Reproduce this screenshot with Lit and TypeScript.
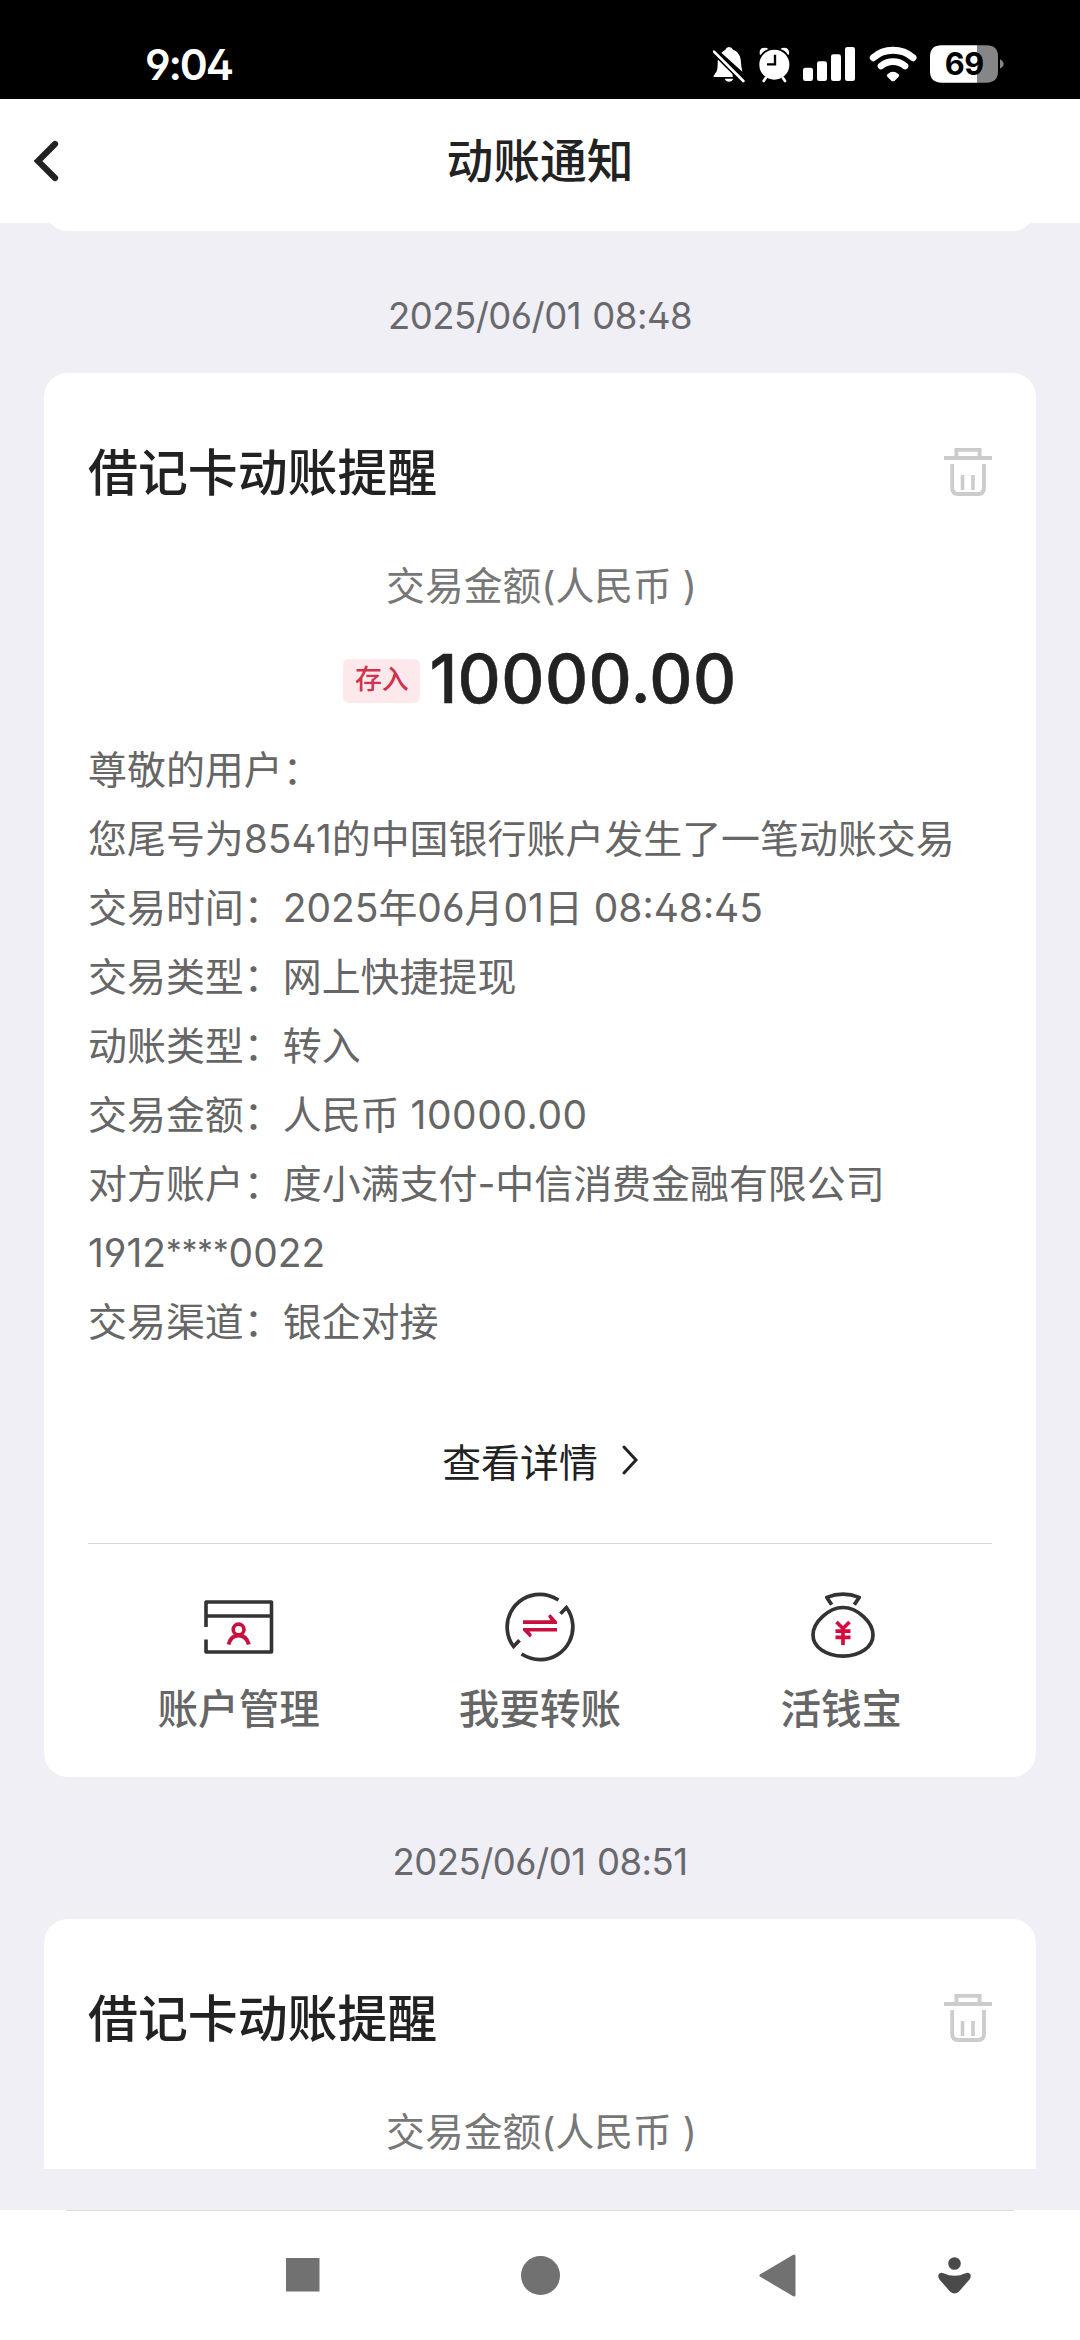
import { LitElement, html, css, svg, nothing } from "lit";
import { customElement, property } from "lit/decorators.js";

const font = css`"Inter", "Noto Sans CJK SC", sans-serif`;

@customElement("status-bar")
class StatusBar extends LitElement {
  static styles = css`
    :host {
      display: flex;
      box-sizing: border-box;
      height: 99px;
      padding: 45px 76px 0 145px;
      background: #000;
      color: #fff;
      font-family: ${font};
    }
    .clock {
      flex: 1;
      height: 40px;
      line-height: 39px;
      font-size: 42.5px;
      font-weight: 600;
      letter-spacing: -2.2px;
      font-feature-settings: "ss01";
    }
    .icons {
      display: flex;
      gap: 13.5px;
    }
    svg {
      display: block;
      height: 38px;
      fill: #fff;
    }
    .level {
      font: 700 92px "Inter", sans-serif;
      letter-spacing: -1px;
      fill: #000;
    }
  `;
  render() {
    return html`
      <div class="clock">9:04</div>
      <div class="icons">
        <svg viewBox="99 75 96 114" width="32">
          <path d="M124 98Q132 92 136 89Q139 81 147 81Q156 81 159 89Q178 95 182 118L184 139L187 155Z" />
          <path d="M114 108L165 160H158V171H101V167L110 154Q113 148 113 130Z" />
          <path d="M134 176H160Q156 185 147 185Q138 185 134 176Z" />
          <path d="M102 95L190 183" stroke="#000" stroke-width="17" />
          <path d="M102 95L190 183" stroke="#fff" stroke-width="8" stroke-linecap="round" />
        </svg>
        <svg viewBox="233 75 92 114" width="30.7">
          <path d="M235 103V95Q237 83 249 83Q257 83 261 87Q245 92 238 105ZM323 103V95Q321 83 309 83Q301 83 297 87Q313 92 320 105Z" />
          <circle cx="279" cy="134" r="45" />
          <path d="M253 174L247 183M305 174L311 183" stroke="#fff" stroke-width="8" stroke-linecap="round" />
          <path d="M281 104V133H257" fill="none" stroke="#000" stroke-width="7" />
        </svg>
        <svg viewBox="366 75 156 114" width="52">
          <rect x="366" y="143" width="30" height="40" rx="7" />
          <rect x="408" y="124" width="30" height="59" rx="7" />
          <rect x="450" y="103" width="30" height="80" rx="7" />
          <rect x="492" y="81" width="30" height="102" rx="7" />
        </svg>
        <svg viewBox="564 75 144 114" width="48">
          <path d="M577 113Q602 91 636 91Q671 91 696 113" fill="none" stroke="#fff" stroke-width="21" stroke-linecap="round" />
          <path d="M600 138Q615 125 636 125Q657 125 672 138" fill="none" stroke="#fff" stroke-width="20" stroke-linecap="round" />
          <path d="M620 162Q636 148 652 162Q657 166 653 170L641 182Q636 186 631 182L619 170Q615 166 620 162Z" />
        </svg>
        <svg viewBox="750 75 222 114" width="74">
          <path d="M785 76H891V188H785Q750 188 750 154V110Q750 76 785 76Z" />
          <path d="M891 76H919Q954 76 954 110V154Q954 188 919 188H891ZM960 118Q971 124 971 132Q971 140 960 146Z" fill="#868686" />
          <text class="level" x="853" y="165" text-anchor="middle">69</text>
        </svg>
      </div>
    `;
  }
}

@customElement("title-bar")
class TitleBar extends LitElement {
  static styles = css`
    :host {
      display: grid;
      grid-template-columns: 1fr auto 1fr;
      align-items: center;
      height: 124px;
      background: #fff;
      color: #222;
      font-family: ${font};
      position: relative;
      z-index: 1;
    }
    .back {
      display: block;
      margin-left: 33px;
    }
    .title {
      font-size: 46.8px;
      font-weight: 500;
      line-height: 60px;
    }
  `;
  render() {
    return html`
      <svg class="back" width="28" height="42" viewBox="0 0 28 42" fill="none" stroke="#222" stroke-width="6.2">
        <path d="M22 4L5 21L22 38" stroke-linecap="round" />
      </svg>
      <div class="title">动账通知</div>
      <span></span>
    `;
  }
}

const trash = svg`
  <g fill="none" stroke="#ccc" stroke-width="3.8">
    <path d="M0 11H48" />
    <path d="M12.4 11V2.8H35.6V11" />
    <path d="M8.2 17V41Q8.2 47 14.2 47H34Q40 47 40 41V17" />
    <path d="M18.5 28V43M29 28V43" stroke-width="3.6" />
  </g>`;

const actionIcons: Record<string, unknown> = {
  account: svg`
    <g fill="none" stroke="#333" stroke-width="3.6" stroke-linejoin="round">
      <path d="M2 35V10H67.5V60H2V47.5M2 24H67.5" />
      <g stroke="#c8103e">
        <circle cx="34.6" cy="37.5" r="5.4" />
        <path d="M24.6 52.5C26 46.5 29.5 43.5 34.6 43.5S43.2 46.5 44.8 52.5" stroke-width="4" />
      </g>
    </g>`,
  transfer: svg`
    <g fill="none" stroke="#333" stroke-width="3.7">
      <path d="M53.5 8C47.5 4.4 41.5 2.3 35 2.3A32.7 32.7 0 0 0 8.6 54.5L14.5 48.3" />
      <path d="M16.5 62C22.5 65.6 28.5 67.7 35 67.7A32.7 32.7 0 0 0 61.4 15.5L55.5 21.7" />
    </g>
    <path d="M18 28.2H45.5L43 24L45.5 22.2L52 29.5V32H18Z" fill="#c8103e" />
    <path d="M52 39.6H24.5L27 43L25 45.5L18 38.6V36H52Z" fill="#c8103e" />`,
  bag: svg`
    <g fill="none" stroke="#333" stroke-width="3.7" transform="translate(2 0)">
      <path d="M23.7 12.7L18.8 5.4Q35 -1 51.2 5.4L46.3 12.7" stroke-linejoin="round" />
      <path d="M35 15.5C49 15.5 65 30 65 43C65 55 52 64.2 35 64.2S5 55 5 43C5 30 21 15.5 35 15.5Z" />
      <path d="M28.5 30L35 36.5L41.5 30M35 36.5V53M27.5 39.2H42.5M27.5 45.3H42.5" stroke="#d60a3d" />
    </g>`,
};

const actions = [
  { icon: "account", label: "账户管理" },
  { icon: "transfer", label: "我要转账" },
  { icon: "bag", label: "活钱宝" },
];

@customElement("notice-card")
class NoticeCard extends LitElement {
  @property({ attribute: false }) lines: string[] = [];

  static styles = css`
    :host {
      display: block;
      flex: none;
      box-sizing: border-box;
      margin: 0 44px;
      padding: 66px 44px 42px;
      border-radius: 24px;
      background: #fff;
      font-family: ${font};
      font-feature-settings: "ss01";
      color: #666;
    }
    .head {
      display: flex;
      justify-content: space-between;
      align-items: center;
      height: 60px;
      color: #222;
      font-size: 49.9px;
      font-weight: 500;
    }
    .trash {
      margin-top: 4px;
    }
    .label {
      margin-top: 57px;
      padding-left: 3px;
      line-height: 60px;
      text-align: center;
      font-size: 38.8px;
      color: #777;
    }
    .amount {
      display: flex;
      justify-content: center;
      align-items: center;
      height: 80px;
      margin-top: 23px;
    }
    .badge {
      width: 77px;
      height: 44px;
      margin: 3px 9px 0 0;
      border-radius: 6px;
      background: #fde9ec;
      color: #cf3350;
      font-size: 27px;
      font-weight: 500;
      line-height: 42px;
      text-align: center;
    }
    .value {
      color: #222;
      font-size: 67px;
      font-weight: 500;
      line-height: 80px;
      letter-spacing: 0.4px;
      -webkit-text-stroke: 0.5px #222;
    }
    .body {
      margin-top: 16px;
      font-size: 38.95px;
      line-height: 69px;
      white-space: nowrap;
    }
    .money {
      letter-spacing: 0.6px;
    }
    .mask {
      font-size: 31px;
      line-height: 0;
      vertical-align: 5px;
      letter-spacing: 0.1px;
    }
    .detail {
      display: flex;
      justify-content: center;
      align-items: center;
      gap: 24px;
      height: 60px;
      margin: 74px 0 53px;
      padding-left: 1px;
      color: #222;
      font-size: 38.9px;
    }
    .actions {
      display: grid;
      grid-template-columns: repeat(3, 1fr);
      border-top: 1px solid #d6d6d6;
      padding-top: 48px;
    }
    .action {
      display: flex;
      flex-direction: column;
      align-items: center;
      gap: 23px;
      font-size: 40.6px;
      font-weight: 500;
      line-height: 50px;
    }
    svg {
      display: block;
    }
  `;

  /** Splits a line so that amounts and masked digits get their own tracking. */
  private line(text: string) {
    return text
      .split(/(\*+|\d+\.\d+)/)
      .map((part) =>
        part.startsWith("*")
          ? html`<span class="mask">${part}</span>`
          : /^\d+\.\d+$/.test(part)
            ? html`<span class="money">${part}</span>`
            : part
      );
  }

  render() {
    return html`
      <div class="head">
        <span>借记卡动账提醒</span>
        <svg class="trash" width="48" height="49" viewBox="0 0 48 49">${trash}</svg>
      </div>
      <div class="label">交易金额(人民币 )</div>
      ${this.lines.length
        ? html`
            <div class="amount">
              <span class="badge">存入</span>
              <span class="value">10000.00</span>
            </div>
            <div class="body">${this.lines.map((l) => html`<div>${this.line(l)}</div>`)}</div>
            <div class="detail">
              <span>查看详情</span>
              <svg width="17" height="30" viewBox="0 0 17 30" fill="none" stroke="#222" stroke-width="3">
                <path d="M2 2L14 15L2 28" stroke-linecap="round" />
              </svg>
            </div>
            <div class="actions">
              ${actions.map(
                (a) => html`
                  <div class="action">
                    <svg width="70" height="70" viewBox="0 0 70 70">${actionIcons[a.icon]}</svg>
                    <span>${a.label}</span>
                  </div>
                `
              )}
            </div>
          `
        : nothing}
    `;
  }
}

@customElement("nav-keys")
class NavKeys extends LitElement {
  static styles = css`
    :host {
      display: block;
      height: 130px;
      background: #fff;
    }
    .edge {
      height: 1px;
      margin: 0 66px;
      background: #dcdce2;
    }
    .keys {
      display: flex;
      align-items: center;
      height: 128px;
      padding-left: 286px;
    }
    .home {
      margin-left: 201px;
    }
    .prev {
      margin-left: 199px;
    }
    .assist {
      margin-left: 142px;
    }
  `;
  render() {
    return html`
      <div class="edge"></div>
      <div class="keys">
        <svg width="34" height="34"><rect width="33.5" height="33.5" fill="#717171" /></svg>
        <svg class="home" width="39" height="39"><circle cx="19.5" cy="19.5" r="19.5" fill="#717171" /></svg>
        <svg class="prev" width="37" height="43" viewBox="0 0 37 43">
          <path d="M35 2V41L2 21.5Z" fill="#717171" stroke="#717171" stroke-width="3" stroke-linejoin="round" />
        </svg>
        <svg class="assist" width="33" height="37" viewBox="0 0 33 37" fill="#4a4a4a">
          <circle cx="16.5" cy="6.5" r="6.3" />
          <path d="M5.5 16.2Q16.5 21.5 27.5 16.2Q31 15 32.5 17.5Q33.3 20 31.5 22.5L21 34.5Q16.5 38.5 12 34.5L1.5 22.5Q-0.3 20 0.5 17.5Q2 15 5.5 16.2Z" />
        </svg>
      </div>
    `;
  }
}

@customElement("app-root")
class AppRoot extends LitElement {
  static styles = css`
    :host {
      display: flex;
      flex-direction: column;
      width: 1080px;
      height: 2340px;
      overflow: hidden;
      background: #efeff5;
      font-family: ${font};
    }
    .feed {
      display: flex;
      flex-direction: column;
      flex: none;
      height: 1946px;
      margin-bottom: 41px;
      overflow: hidden;
    }
    .previous {
      flex: none;
      height: 60px;
      margin: -52px 44px 0;
      border-radius: 24px;
      background: #fff;
    }
    .date {
      flex: none;
      box-sizing: border-box;
      height: 142px;
      padding-top: 55px;
      text-align: center;
      font-size: 36.5px;
      line-height: 60px;
      letter-spacing: -0.5px;
      word-spacing: 1.5px;
      color: #68686d;
      font-feature-settings: "ss01";
    }
  `;
  private lines = [
    "尊敬的用户：",
    "您尾号为8541的中国银行账户发生了一笔动账交易",
    "交易时间：2025年06月01日 08:48:45",
    "交易类型：网上快捷提现",
    "动账类型：转入",
    "交易金额：人民币 10000.00",
    "对方账户：度小满支付-中信消费金融有限公司",
    "1912****0022",
    "交易渠道：银企对接",
  ];
  render() {
    return html`
      <status-bar></status-bar>
      <title-bar></title-bar>
      <div class="feed">
        <div class="previous"></div>
        <div class="date">2025/06/01 08:48</div>
        <notice-card .lines=${this.lines}></notice-card>
        <div class="date">2025/06/01 08:51</div>
        <notice-card></notice-card>
      </div>
      <nav-keys></nav-keys>
    `;
  }
}
